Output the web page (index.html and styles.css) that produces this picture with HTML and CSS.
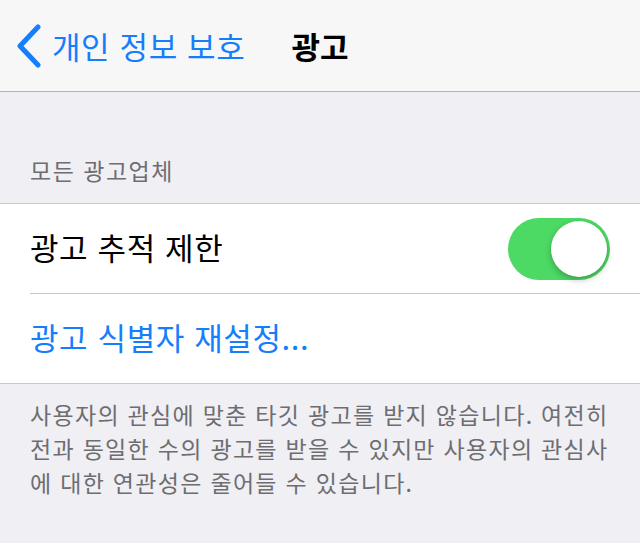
FILE: index.html
```html
<!DOCTYPE html>
<html lang="ko">

<head>
  <meta name="viewport" content="width=device-width, initial-scale=1.0" />
  <title>광고</title>
  <link rel="stylesheet" href="styles.css">
</head>

<body>

  <div class="navbar">
    <div class="back">
      <svg class="chevron" width="26" height="44" viewBox="0 0 26 44">
        <path d="M22 3 L4 22 L22 41" fill="none" stroke="#157efb" stroke-width="5" stroke-linecap="round" stroke-linejoin="round" />
      </svg>
      <span class="back-label">개인 정보 보호</span>
    </div>
    <div class="title">광고</div>
  </div>

  <div class="section-header">모든 광고업체</div>

  <div class="group">
    <div class="row">
      <div class="row-inner">
        <span class="row-label">광고 추적 제한</span>
        <div class="switch">
          <div class="knob"></div>
        </div>
      </div>
    </div>
    <div class="row">
      <div class="row-inner last">
        <span class="row-link">광고 식별자 재설정...</span>
      </div>
    </div>
  </div>

  <div class="section-footer">
    사용자의 관심에 맞춘 타깃 광고를 받지 않습니다. 여전히<br>
    전과 동일한 수의 광고를 받을 수 있지만 사용자의 관심사<br>
    에 대한 연관성은 줄어들 수 있습니다.
  </div>

</body>

</html>
```

FILE: styles.css
```css
* {
  padding: 0;
  margin: 0;
  box-sizing: border-box;
  font-family: "Noto Sans CJK KR", "Noto Sans", sans-serif;
}

body {
  width: 640px;
  height: 543px;
  background-color: #efeff4;
  overflow: hidden;
}

.navbar {
  position: relative;
  height: 92px;
  background-color: #f7f7f8;
  border-bottom: 1px solid #b2b2b2;
  display: flex;
  align-items: center;
}

.back {
  display: flex;
  align-items: center;
  padding-left: 16px;
  gap: 10px;
  color: #157efb;
}

.chevron {
  display: block;
}

.back-label {
  font-size: 31px;
  letter-spacing: 0.6px;
  line-height: 1;
}

.title {
  position: absolute;
  left: 0;
  right: 0;
  text-align: center;
  font-size: 31px;
  font-weight: 700;
  color: #000000;
  pointer-events: none;
}

.section-header {
  padding: 62px 30px 0 30px;
  height: 111px;
  font-size: 23px;
  letter-spacing: 1.5px;
  line-height: 32px;
  color: #6d6d72;
}

.group {
  background-color: #ffffff;
  border-top: 1px solid #c8c7cc;
  border-bottom: 1px solid #c8c7cc;
}

.row {
  padding-left: 30px;
}

.row-inner {
  height: 90px;
  display: flex;
  align-items: center;
  justify-content: space-between;
  padding-right: 30px;
  border-bottom: 1px solid #c8c7cc;
}

.row-inner.last {
  border-bottom: none;
  height: 89px;
}

.row-label {
  font-size: 31px;
  letter-spacing: 0.6px;
  color: #000000;
  margin-top: -4px;
}

.row-link {
  font-size: 31px;
  letter-spacing: 0.6px;
  color: #157efb;
  margin-top: -4px;
}

.switch {
  position: relative;
  width: 102px;
  height: 62px;
  border-radius: 31px;
  background-color: #4cd964;
}

.knob {
  position: absolute;
  top: 3px;
  right: 3px;
  width: 56px;
  height: 56px;
  border-radius: 50%;
  background-color: #ffffff;
  box-shadow: 0 3px 6px rgba(0, 0, 0, 0.25), 0 0 1px rgba(0, 0, 0, 0.15);
}

.section-footer {
  padding: 13px 30px 0 30px;
  font-size: 23px;
  letter-spacing: 1.3px;
  line-height: 34px;
  color: #6d6d72;
  white-space: nowrap;
}
```
